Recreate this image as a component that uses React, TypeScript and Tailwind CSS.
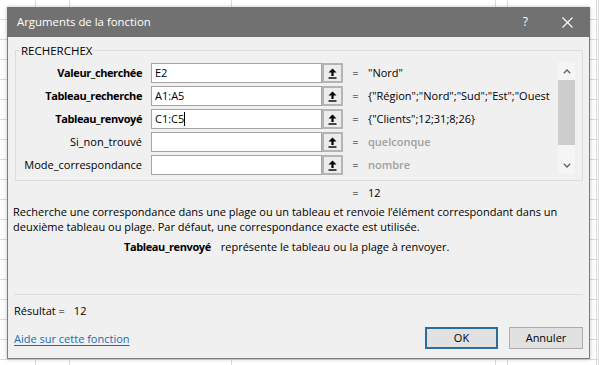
import React from "react";

const font = { fontFamily: '"Segoe UI", "Open Sans", "Noto Sans", sans-serif' };

const colWidths = ["w-[36px]", "w-[34px]", "w-[162px]", "w-[264px]", "w-[12px]", "w-[89px]", "flex-1"];

type Arg = {
  label: string;
  bold: boolean;
  input: string;
  value: string;
  muted?: boolean;
  caret?: boolean;
};

// the second value is shown truncated, as in the dialog
const args: Arg[] = [
  { label: "Valeur_cherchée", bold: true, input: "E2", value: '"Nord"' },
  { label: "Tableau_recherche", bold: true, input: "A1:A5", value: '{"Région";"Nord";"Sud";"Est";"Ouest' },
  { label: "Tableau_renvoyé", bold: true, input: "C1:C5", value: '{"Clients";12;31;8;26}', caret: true },
  { label: "Si_non_trouvé", bold: false, input: "", value: "quelconque", muted: true },
  { label: "Mode_correspondance", bold: false, input: "", value: "nombre", muted: true },
];

const CollapseIcon = () => (
  <svg width="9" height="11" viewBox="0 0 9 11">
    <path d="M4.5 0.5 L8.5 4.5 L5.6 4.5 L5.6 8 L3.4 8 L3.4 4.5 L0.5 4.5 Z" fill="#000" />
    <rect x="0.5" y="9.3" width="8" height="1.4" fill="#000" />
  </svg>
);

const ArgRow = ({ arg }: { arg: Arg }) => (
  <div className="flex items-center h-[20px]">
    <div className={`w-[126px] text-right whitespace-nowrap ${arg.bold ? "font-bold tracking-[-0.4px]" : ""}`}>
      {arg.label}
    </div>
    <div className="ml-[9px] w-[171px] h-[20px] bg-white border border-[#a5a5a5] flex items-center pl-[3px]">
      {arg.input}
      {arg.caret && <span className="inline-block w-px h-[14px] bg-black" />}
    </div>
    <div className="w-[21px] h-[20px] border-2 border-[#b4b4b4] bg-[#ececec] flex items-center justify-center">
      <CollapseIcon />
    </div>
    <div className="w-[25px] text-center">=</div>
    <div className={`flex-1 whitespace-nowrap ${arg.muted ? "text-[#a0a0a0] font-semibold" : ""}`}>
      {arg.value}
    </div>
  </div>
);

const Chevron = ({ up }: { up?: boolean }) => (
  <svg width="8" height="5" viewBox="0 0 8 5">
    <path
      d={up ? "M0.8 4.2 L4 1 L7.2 4.2" : "M0.8 0.8 L4 4 L7.2 0.8"}
      stroke="#606060"
      strokeWidth="1.3"
      fill="none"
    />
  </svg>
);

export default function App() {
  return (
    <div className="relative w-[599px] h-[365px] overflow-hidden bg-white" style={font}>
      {/* spreadsheet behind the dialog */}
      <div className="flex flex-col">
        {Array.from({ length: 19 }).map((_, r) => (
          <div key={r} className="flex h-[20px] border-b border-[#dadada]">
            {colWidths.map((w, c) => (
              <div key={c} className={`${w} border-r border-[#dadada]`} />
            ))}
          </div>
        ))}
      </div>

      {/* dialog */}
      <div className="absolute left-[7px] top-[7px] w-[583px] h-[352px] flex flex-col text-[11px] text-black shadow-[0_0_4px_rgba(0,0,0,0.25)]">
        <div className="h-[30px] bg-[#717171] flex items-center pl-[10px] pr-[17px] text-white text-[11.4px]">
          <span>Arguments de la fonction</span>
          <span className="ml-auto text-[12px] mr-[34px]">?</span>
          <svg width="11" height="11" viewBox="0 0 11 11">
            <path d="M0.5 0.5 L10.5 10.5 M10.5 0.5 L0.5 10.5" stroke="#fff" strokeWidth="1.1" />
          </svg>
        </div>

        <div className="flex-1 flex flex-col bg-[#f0f0f0] border-x border-b border-[#7d7d7d]">
          {/* RECHERCHEX group */}
          <div className="relative mt-[13px] ml-[7px] mr-[6px] border border-[#dcdcdc] pt-[12px] pb-[5px] flex">
            <span className="absolute left-[4px] top-[-9px] bg-[#f0f0f0] px-px text-[11.5px]">RECHERCHEX</span>
            <div className="flex-1 flex flex-col gap-[3px]">
              {args.map((a) => (
                <ArgRow key={a.label} arg={a} />
              ))}
            </div>
            <div className="w-[17px] h-[112px] mt-[-1px] mr-[7px] ml-[7px] bg-[#f5f5f5] flex flex-col items-center">
              <div className="h-[18px] flex items-center">
                <Chevron up />
              </div>
              <div className="w-[17px] h-[65px] bg-[#cdcdcd]" />
              <div className="flex-1" />
              <div className="h-[18px] flex items-center">
                <Chevron />
              </div>
            </div>
          </div>

          <div className="flex mt-[5px] h-[15px] items-center">
            <div className="w-[335px]" />
            <div className="w-[25px] text-center">=</div>
            <div>12</div>
          </div>

          <div className="mt-[3px] pl-[5px] leading-[15px] whitespace-nowrap">
            <div>Recherche une correspondance dans une plage ou un tableau et renvoie l’élément correspondant dans un</div>
            <div>deuxième tableau ou plage. Par défaut, une correspondance exacte est utilisée.</div>
          </div>

          <div className="mt-[5px] pl-[116px] flex leading-[15px] whitespace-nowrap">
            <span className="font-bold tracking-[-0.4px]">Tableau_renvoyé</span>
            <span className="ml-[10px]">représente le tableau ou la plage à renvoyer.</span>
          </div>

          <div className="mt-[40px] mx-[6px] border-t border-[#dcdcdc]" />

          <div className="mt-[8px] pl-[6px] leading-[15px]">
            Résultat =<span className="ml-[9px]">12</span>
          </div>

          <div className="mt-[9px] flex items-center pl-[6px] pr-[6px]">
            <a className="text-[#1a6bb8] underline underline-offset-2 mt-[2px]">Aide sur cette fonction</a>
            <div className="ml-auto flex gap-[11px]">
              <div className="w-[73px] h-[22px] border-2 border-[#2a6d9c] bg-[#e1e1e1] flex items-center justify-center">
                OK
              </div>
              <div className="w-[74px] h-[22px] border border-[#adadad] bg-[#e1e1e1] flex items-center justify-center">
                Annuler
              </div>
            </div>
          </div>
        </div>
      </div>
    </div>
  );
}
